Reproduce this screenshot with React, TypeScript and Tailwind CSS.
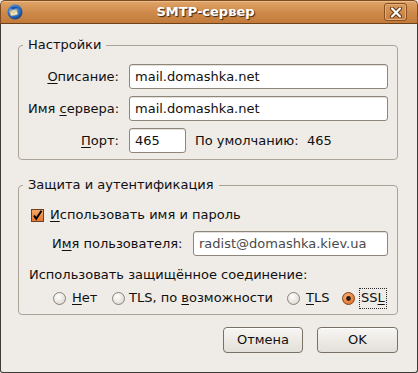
import React from "react";

const U = ({ children }: { children: React.ReactNode }) => (
  <span className="underline underline-offset-[2px] decoration-[1px]">{children}</span>
);

function Radio({ checked }: { checked?: boolean }) {
  return (
    <svg width="13" height="13" viewBox="0 0 13 13" className="shrink-0">
      <defs>
        <radialGradient id="rw" cx="40%" cy="35%" r="70%">
          <stop offset="0%" stopColor="#ffffff" />
          <stop offset="100%" stopColor="#dcd7d0" />
        </radialGradient>
        <radialGradient id="ro" cx="40%" cy="35%" r="70%">
          <stop offset="0%" stopColor="#fbb27a" />
          <stop offset="100%" stopColor="#e36d22" />
        </radialGradient>
      </defs>
      <circle cx="6.5" cy="6.5" r="6" fill={checked ? "url(#ro)" : "url(#rw)"} stroke={checked ? "#7a4a24" : "#8a8278"} strokeWidth="1" />
      {checked && <circle cx="6.5" cy="6.5" r="2.4" fill="#2a1a10" />}
    </svg>
  );
}

function Checkbox() {
  return (
    <svg width="13" height="13" viewBox="0 0 13 13" className="shrink-0">
      <defs>
        <linearGradient id="cb" x1="0" y1="0" x2="0" y2="1">
          <stop offset="0%" stopColor="#f9a865" />
          <stop offset="100%" stopColor="#e8762c" />
        </linearGradient>
      </defs>
      <rect x="0.5" y="0.5" width="12" height="12" fill="url(#cb)" stroke="#6e4020" />
      <path d="M3 6.5 L5.2 9.8 L10.5 1.8" fill="none" stroke="#000" strokeWidth="2" strokeLinejoin="miter" />
    </svg>
  );
}

function TbIcon() {
  return (
    <svg width="16" height="16" viewBox="0 0 16 16">
      <defs>
        <radialGradient id="tb" cx="40%" cy="35%" r="70%">
          <stop offset="0%" stopColor="#7fb6ee" />
          <stop offset="60%" stopColor="#2a6fc4" />
          <stop offset="100%" stopColor="#153c7a" />
        </radialGradient>
      </defs>
      <circle cx="8" cy="8" r="7.5" fill="url(#tb)" />
      <path d="M2.5 7 L9.5 5.5 L11 10.5 L4 12 Z" fill="#f0e6c8" stroke="#b09a6a" strokeWidth="0.6" />
      <path d="M2.5 7 L7 9 L9.5 5.5" fill="none" stroke="#b09a6a" strokeWidth="0.6" />
      <path d="M3 4 Q8 0.5 14 5 Q10 3.5 6 5.5 Z" fill="#1d4f9c" />
    </svg>
  );
}

const inputCls =
  "h-[25px] bg-white border border-[#8e867b] rounded-[3px] px-[5px] flex items-center text-[13px] leading-[16px] shadow-[inset_0_1px_0_#e4e0db]";

export default function App() {
  return (
    <div
      className="w-[418px] h-[373px] flex flex-col bg-[#efebe7] text-[#101010] text-[13px] leading-[16px]"
      style={{ fontFamily: '"DejaVu Sans", "Noto Sans", sans-serif' }}
    >
      {/* Title bar */}
      <div className="h-[24px] shrink-0 rounded-t-[5px] bg-gradient-to-b from-[#dfa468] via-[#cf8b4b] to-[#c27a3a] border border-[#7d4b1f] border-b-[#6e4219] shadow-[inset_0_1px_0_#eebd8c] flex items-center px-[6px] relative">
        <TbIcon />
        <div className="flex-1 text-center font-bold text-white text-[13px] [text-shadow:1px_1px_1px_#3a2310] pl-[4px]">
          SMTP-сервер
        </div>
        <div className="w-[23px] h-[18px] mr-[4px] rounded-[3px] border border-[#874f22] shadow-[inset_0_0_0_1px_#e3ae7c] bg-gradient-to-b from-[#d89a5c] to-[#c67d3c] flex items-center justify-center">
          <svg width="12" height="11" viewBox="0 0 12 11">
            <path d="M2 1.5 L10 9.5 M10 1.5 L2 9.5" stroke="#5a3414" strokeWidth="4" strokeLinecap="round" />
            <path d="M2 1.5 L10 9.5 M10 1.5 L2 9.5" stroke="#ffffff" strokeWidth="2.2" strokeLinecap="round" />
          </svg>
        </div>
      </div>

      {/* Body */}
      <div className="flex-1 flex flex-col border-x border-b border-[#3e3a36] rounded-b-[3px] pl-[17px] pr-[19px] pt-[13px]">
        <fieldset className="border border-[#aba398] rounded-[4px] m-0 p-0">
          <legend className="ml-[4px] px-[5px] leading-[16px]">Настройки</legend>
          <div className="flex flex-col gap-[7px] pt-[11px] pb-[6px] pl-[9px] pr-[9px]">
            <div className="flex items-center h-[25px]">
              <span className="w-[91px] text-right whitespace-nowrap">
                <U>О</U>писание:
              </span>
              <div className={`${inputCls} flex-1 ml-[10px]`}>mail.domashka.net</div>
            </div>
            <div className="flex items-center h-[25px]">
              <span className="w-[91px] text-right whitespace-nowrap">
                Имя <U>с</U>ервера:
              </span>
              <div className={`${inputCls} flex-1 ml-[10px]`}>mail.domashka.net</div>
            </div>
            <div className="flex items-center h-[25px]">
              <span className="w-[91px] text-right whitespace-nowrap">
                <U>П</U>орт:
              </span>
              <div className={`${inputCls} w-[57px] ml-[10px]`}>465</div>
              <span className="w-[112px] ml-[9px] whitespace-nowrap">По умолчанию:</span>
              <span>465</span>
            </div>
          </div>
        </fieldset>

        <fieldset className="border border-[#aba398] rounded-[4px] m-0 p-0 mt-[17px]">
          <legend className="ml-[4px] px-[5px] leading-[16px]">Защита и аутентификация</legend>
          <div className="flex flex-col pt-[12px] pb-[6px] pr-[9px]">
            <div className="flex items-center h-[20px] pl-[12px] gap-[6px]">
              <Checkbox />
              <span className="whitespace-nowrap">
                <U>И</U>спользовать имя и пароль
              </span>
            </div>
            <div className="flex items-center h-[25px] mt-[6px] pl-[33px]">
              <span className="w-[141px] whitespace-nowrap">
                И<U>м</U>я пользователя:
              </span>
              <div className={`${inputCls} flex-1 text-[#4a4a4a]`}>radist@domashka.kiev.ua</div>
            </div>
            <div className="h-[16px] mt-[11px] pl-[10px] whitespace-nowrap">
              Использовать защищённое соединение:
            </div>
            <div className="flex items-center h-[20px] mt-[5px] pl-[34px]">
              <div className="w-[59px] flex items-center gap-[6px]">
                <Radio />
                <span>
                  <U>Н</U>ет
                </span>
              </div>
              <div className="w-[175px] flex items-center gap-[4px] whitespace-nowrap">
                <Radio />
                <span>
                  TLS, по <U>в</U>озможности
                </span>
              </div>
              <div className="w-[55px] flex items-center gap-[6px]">
                <Radio />
                <span>
                  <U>T</U>LS
                </span>
              </div>
              <div className="flex items-center gap-[4px]">
                <Radio checked />
                <span className="border border-dotted border-[#2a2a2a] px-[1px] h-[21px] flex items-center">
                  SS<U>L</U>
                </span>
              </div>
            </div>
          </div>
        </fieldset>

        <div className="flex justify-end gap-[14px] mt-[12px] pr-0">
          <button className="w-[80px] h-[26px] rounded-[4px] border border-[#7a7166] bg-gradient-to-b from-[#f8f6f3] to-[#e3dfd9] shadow-[inset_0_1px_0_#ffffff] text-[13px]">
            Отмена
          </button>
          <button className="w-[81px] h-[26px] rounded-[4px] border border-[#7a7166] bg-gradient-to-b from-[#f8f6f3] to-[#e3dfd9] shadow-[inset_0_1px_0_#ffffff] text-[13px]">
            OK
          </button>
        </div>
      </div>
    </div>
  );
}
